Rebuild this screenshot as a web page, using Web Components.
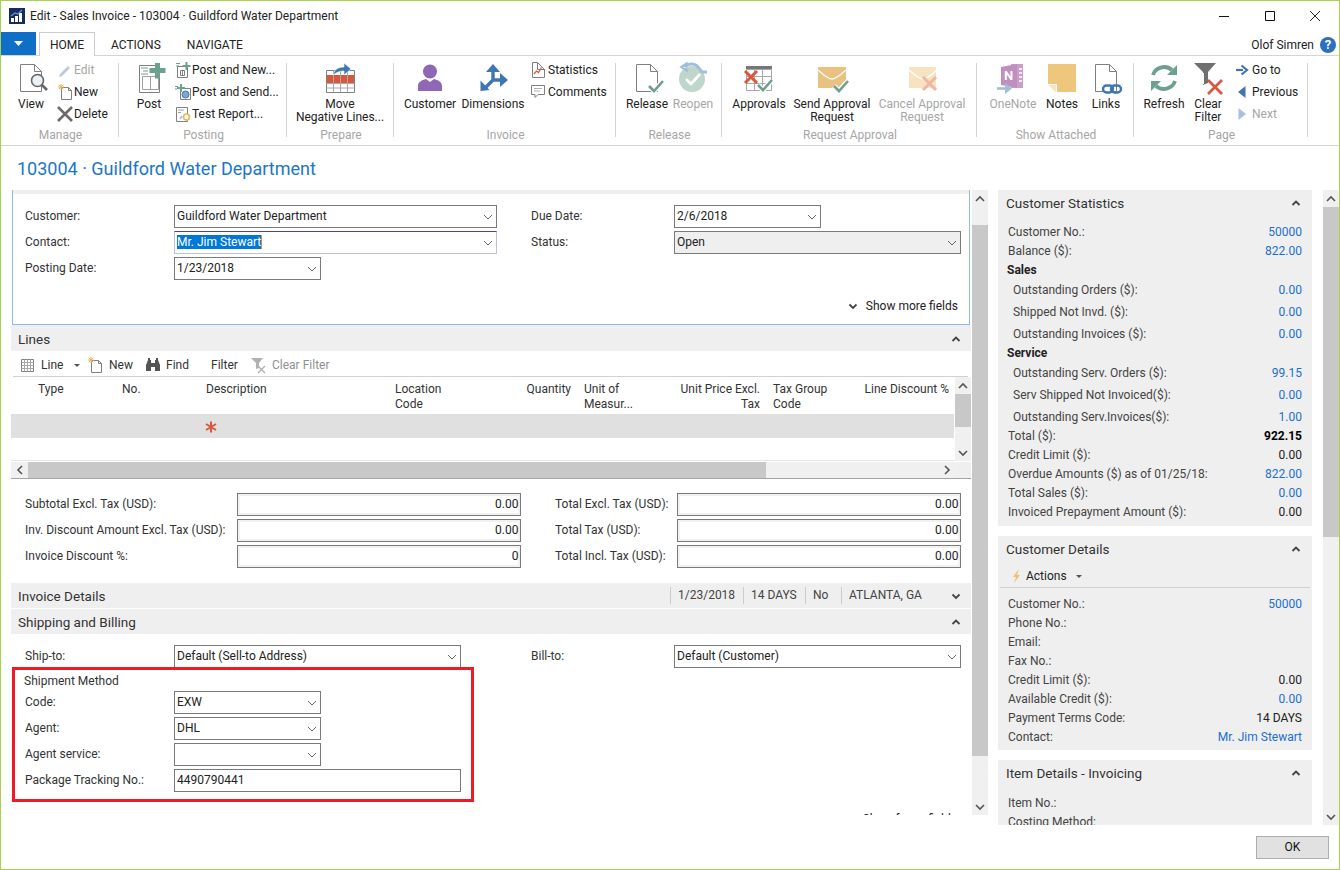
<!doctype html>
<html lang="en">
<head>
<meta charset="utf-8">
<title>Edit - Sales Invoice</title>
<style>
  html, body { margin: 0; padding: 0; background: #fff; }
  body { font: 12px/16px Roboto, "Liberation Sans", sans-serif; color: #222; }
</style>
</head>
<body>
<invoice-window>
  <title-bar>Edit - Sales Invoice - 103004 · Guildford Water Department</title-bar>
  <ribbon-tabs>Olof Simren</ribbon-tabs>
  <ribbon-bar>
    <ribbon-group style="width:118px" label="Manage">
      <ribbon-big icon="view" style="margin-left:5px;width:50px">View</ribbon-big>
      <ribbon-stack style="margin-left:2px">
        <ribbon-small icon="edit" disabled>Edit</ribbon-small>
        <ribbon-small icon="new">New</ribbon-small>
        <ribbon-small icon="delete">Delete</ribbon-small>
      </ribbon-stack>
    </ribbon-group>
    <ribbon-group style="width:168px" label="Posting">
      <ribbon-big icon="post" style="margin-left:4px;width:52px">Post</ribbon-big>
      <ribbon-stack style="margin-left:1px">
        <ribbon-small icon="postnew">Post and New...</ribbon-small>
        <ribbon-small icon="postsend">Post and Send...</ribbon-small>
        <ribbon-small icon="testreport">Test Report...</ribbon-small>
      </ribbon-stack>
    </ribbon-group>
    <ribbon-group style="width:107px" label="Prepare">
      <ribbon-big icon="move" style="width:106px">Move<br>Negative Lines...</ribbon-big>
    </ribbon-group>
    <ribbon-group style="width:222px" label="Invoice">
      <ribbon-big icon="customer" style="margin-left:6px;width:60px">Customer</ribbon-big>
      <ribbon-big icon="dimensions" style="margin-left:2px;width:62px">Dimensions</ribbon-big>
      <ribbon-stack style="margin-left:8px">
        <ribbon-small icon="statistics">Statistics</ribbon-small>
        <ribbon-small icon="comments">Comments</ribbon-small>
      </ribbon-stack>
    </ribbon-group>
    <ribbon-group style="width:106px" label="Release">
      <ribbon-big icon="release" style="margin-left:11px;width:40px">Release</ribbon-big>
      <ribbon-big icon="reopen" disabled style="margin-left:6px;width:40px">Reopen</ribbon-big>
    </ribbon-group>
    <ribbon-group style="width:255px" label="Request Approval">
      <ribbon-big icon="approvals" style="margin-left:7px;width:60px">Approvals</ribbon-big>
      <ribbon-big icon="sendapproval" style="margin-left:1px;width:84px">Send Approval<br>Request</ribbon-big>
      <ribbon-big icon="cancelapproval" disabled style="margin-left:2px;width:92px">Cancel Approval<br>Request</ribbon-big>
    </ribbon-group>
    <ribbon-group style="width:157px" label="Show Attached">
      <ribbon-big icon="onenote" disabled style="margin-left:6px;width:60px">OneNote</ribbon-big>
      <ribbon-big icon="notes" style="width:38px">Notes</ribbon-big>
      <ribbon-big icon="links" style="width:50px">Links</ribbon-big>
    </ribbon-group>
    <ribbon-group style="width:174px" label="Page">
      <ribbon-big icon="refresh" style="margin-left:4px;width:52px">Refresh</ribbon-big>
      <ribbon-big icon="clearfilter" style="width:36px">Clear<br>Filter</ribbon-big>
      <ribbon-stack style="margin-left:10px">
        <ribbon-small icon="goto">Go to</ribbon-small>
        <ribbon-small icon="previous">Previous</ribbon-small>
        <ribbon-small icon="next" disabled>Next</ribbon-small>
      </ribbon-stack>
    </ribbon-group>
  </ribbon-bar>
  <page-title>103004 · Guildford Water Department</page-title>
  <work-space>
    <main-pane slot="main">
      <focus-panel>
        <field-column>
          <form-field label="Customer:"><value-box drop style="width:323px">Guildford Water Department</value-box></form-field>
          <form-field label="Contact:"><value-box drop focused style="width:323px"><mark>Mr. Jim Stewart</mark></value-box></form-field>
          <form-field label="Posting Date:"><value-box drop style="width:147px">1/23/2018</value-box></form-field>
        </field-column>
        <field-column slot="right" style="--label:143px">
          <form-field label="Due Date:"><value-box drop style="width:147px">2/6/2018</value-box></form-field>
          <form-field label="Status:"><value-box drop readonly style="width:287px">Open</value-box></form-field>
        </field-column>
        <show-fields slot="more">Show more fields</show-fields>
      </focus-panel>

      <fast-tab style="height:26px;padding-top:1px;box-sizing:border-box" fold="fold-up">Lines</fast-tab>
      <tool-bar style="padding-left:10px">
        <tool-item icon="grid" caret style="width:67px;--gap:4px">Line</tool-item>
        <tool-item icon="new" style="width:57px">New</tool-item>
        <tool-item icon="find" style="width:66px">Find</tool-item>
        <tool-item style="width:40px">Filter</tool-item>
        <tool-item icon="clearsmall" disabled>Clear Filter</tool-item>
      </tool-bar>
      <lines-grid></lines-grid>

      <total-fields>
        <field-column style="--label:212px">
          <form-field label="Subtotal Excl. Tax (USD):"><value-box total style="width:284px">0.00</value-box></form-field>
          <form-field label="Inv. Discount Amount Excl. Tax (USD):"><value-box total style="width:284px">0.00</value-box></form-field>
          <form-field label="Invoice Discount %:"><value-box total style="width:284px">0</value-box></form-field>
        </field-column>
        <field-column slot="right" style="--label:122px">
          <form-field label="Total Excl. Tax (USD):"><value-box total style="width:284px">0.00</value-box></form-field>
          <form-field label="Total Tax (USD):"><value-box total style="width:284px">0.00</value-box></form-field>
          <form-field label="Total Incl. Tax (USD):"><value-box total style="width:284px">0.00</value-box></form-field>
        </field-column>
      </total-fields>

      <fast-tab style="height:25px;margin-bottom:1px" fold="fold-down">Invoice Details
        <fact-cell slot="facts" style="width:73px">1/23/2018</fact-cell>
        <fact-cell slot="facts" style="width:62px">14 DAYS</fact-cell>
        <fact-cell slot="facts" style="width:36px">No</fact-cell>
        <fact-cell slot="facts" style="width:100px">ATLANTA, GA</fact-cell>
      </fast-tab>
      <fast-tab style="height:25px" fold="fold-up">Shipping and Billing</fast-tab>

      <shipping-fields>
        <field-column>
          <form-field label="Ship-to:"><value-box drop style="width:287px">Default (Sell-to Address)</value-box></form-field>
          <group-caption>Shipment Method</group-caption>
          <form-field label="Code:"><value-box drop style="width:147px">EXW</value-box></form-field>
          <form-field label="Agent:"><value-box drop style="width:147px">DHL</value-box></form-field>
          <form-field label="Agent service:"><value-box drop style="width:147px"></value-box></form-field>
          <form-field label="Package Tracking No.:"><value-box style="width:287px">4490790441</value-box></form-field>
        </field-column>
        <field-column slot="right" style="--label:143px">
          <form-field label="Bill-to:"><value-box drop style="width:287px">Default (Customer)</value-box></form-field>
        </field-column>
        <show-fields slot="more" fewer>Show fewer fields</show-fields>
      </shipping-fields>
      <mark-box></mark-box>
    </main-pane>
    <nav-scrollbar slot="main-bar" style="--offset:18px;--thumb:531px"></nav-scrollbar>

    <fact-box slot="side" heading="Customer Statistics" style="padding-bottom:5px">
      <cue-row label="Customer No.:" link>50000</cue-row>
      <cue-row label="Balance ($):" link>822.00</cue-row>
      <cue-row label="Sales" head></cue-row>
      <cue-row label="Outstanding Orders ($):" link indent pull>0.00</cue-row>
      <cue-row label="Shipped Not Invd. ($):" link indent>0.00</cue-row>
      <cue-row label="Outstanding Invoices ($):" link indent>0.00</cue-row>
      <cue-row label="Service" head pull></cue-row>
      <cue-row label="Outstanding Serv. Orders ($):" link indent pull>99.15</cue-row>
      <cue-row label="Serv Shipped Not Invoiced($):" link indent>0.00</cue-row>
      <cue-row label="Outstanding Serv.Invoices($):" link indent>1.00</cue-row>
      <cue-row label="Total ($):" strong pull>922.15</cue-row>
      <cue-row label="Credit Limit ($):">0.00</cue-row>
      <cue-row label="Overdue Amounts ($) as of 01/25/18:" link>822.00</cue-row>
      <cue-row label="Total Sales ($):" link>0.00</cue-row>
      <cue-row label="Invoiced Prepayment Amount ($):">0.00</cue-row>
    </fact-box>
    <fact-box slot="side" heading="Customer Details" actions>
      <cue-row label="Customer No.:" link>50000</cue-row>
      <cue-row label="Phone No.:"></cue-row>
      <cue-row label="Email:"></cue-row>
      <cue-row label="Fax No.:"></cue-row>
      <cue-row label="Credit Limit ($):">0.00</cue-row>
      <cue-row label="Available Credit ($):" link>0.00</cue-row>
      <cue-row label="Payment Terms Code:">14 DAYS</cue-row>
      <cue-row label="Contact:" link>Mr. Jim Stewart</cue-row>
    </fact-box>
    <fact-box slot="side" heading="Item Details - Invoicing">
      <cue-row label="Item No.:" style="margin-top:1px"></cue-row>
      <cue-row label="Costing Method:"></cue-row>
    </fact-box>
    <nav-scrollbar slot="side-bar" style="--offset:0px;--thumb:330px"></nav-scrollbar>
  </work-space>
  <dialog-footer>OK</dialog-footer>
</invoice-window>

<script>
const GREY = "#808080";
const GREEN = "#6da08e";
const RED = "#d9583c";
const BLUE = "#3f76b2";

// page outline with a folded corner
const page = (x, y, w, h, color = GREY) =>
  `<path d="M${x} ${y}h${w - 7}l7 7v${h - 7}h-${w}zM${x + w - 7} ${y}v7h7" fill="#fff" stroke="${color}"/>`;
const tick = (x, y) =>
  `<path d="M${x} ${y}l5 5 9-10" fill="none" stroke="#fff" stroke-width="5"/><path d="M${x} ${y}l5 5 9-10" fill="none" stroke="${GREEN}" stroke-width="2.6"/>`;
const cross = (x, y, s, color = RED, width = 2.6) =>
  `<path d="M${x} ${y}l${s} ${s}M${x + s} ${y}l-${s} ${s}" stroke="${color}" stroke-width="${width}" fill="none"/>`;
const chevron = (points, color, width) =>
  `<polyline points="${points}" fill="none" stroke="${color}" stroke-width="${width}"/>`;

const icons = {
  // ribbon, 32px
  view: [32, `${page(5.5, 2.5, 21, 27)}<circle cx="22.5" cy="18.5" r="6" fill="#eaf1f7" stroke="#666" stroke-width="1.6"/><path d="M27 23l5 5" stroke="#666" stroke-width="2.6"/>`],
  post: [32, `<path d="M6.5 3.5h20v27h-20z" fill="#fff" stroke="${GREY}"/><path d="M9.5 14.5h16v13h-16zM17.5 14.5v13" fill="none" stroke="#a0a0a0"/><path d="M8 6h7M10 9h5M8 12h7" stroke="${GREEN}"/><path d="M22 1h5v5h5.500v5H27v5.500h-5V11h-5.500V6H22z" fill="${GREEN}"/>`],
  move: [32, `<path d="M2.5 8.5h28v22h-28z" fill="#fff" stroke="${GREY}"/><path d="M3 13h27v8H3z" fill="${RED}"/><path d="M2.5 21.5h28M2.5 26h28M9.5 8.5v22M16.5 8.5v22M23.5 8.5v22" stroke="#a8a8a8"/><path d="M9.500 13C10 7 15 5 20 5V1l7 6-7 6V9c-4 0-7 1-10.500 4z" fill="${BLUE}" stroke="#fff" stroke-width=".6"/>`],
  customer: [32, `<circle cx="16" cy="9.500" r="7" fill="#8e68b6"/><path d="M4 29v-5c0-4 4-6 8-7l4 3 4-3c4 1 8 3 8 7v5z" fill="#8e68b6"/>`],
  dimensions: [32, `<path d="M16 9v9L8 26M16 18l9 0" fill="none" stroke="${BLUE}" stroke-width="3.400"/><path d="M16 2l7 8H9zM3.500 29V18.500l9 9.500zM31 18l-8 7V11z" fill="${BLUE}"/>`],
  release: [32, `${page(5.5, 2.5, 21, 27)}${tick(18, 24)}`],
  reopen: [32, `<circle cx="15" cy="17" r="13" fill="#bfd6cc"/><path d="M9 17l5 5 9-10" fill="none" stroke="#fff" stroke-width="2.800"/><path d="M8 5c3-4 10-4 13 0l4 5h5-1M11 1L5 5l6 4" fill="none" stroke="#a3bedb" stroke-width="3"/>`],
  approvals: [32, `<path d="M3 4h26v3H3z" fill="#777"/><path d="M3.500 7.500h25v21h-25zM3.500 14.500h25M3.500 21.500h25M11.500 7.500v21M19.500 7.500v21" fill="#fff" stroke="#a8a8a8"/>${cross(2, 9, 12, RED, 3)}${tick(15, 23)}`],
  sendapproval: [32, `<path d="M2 5h28v21H2z" fill="#e9c282"/><path d="M2 8c5 4 9 9 14 9s9-5 14-9" fill="none" stroke="#fff" stroke-width="1.300"/>${tick(18, 24)}`],
  cancelapproval: [32, `<path d="M3 5h27v21H3z" fill="#f7e3bf"/><path d="M3 8c5 4 9 9 14 9s9-5 14-9" fill="none" stroke="#fff" stroke-width="1.300"/>${cross(17, 15, 13, "#eeb6a6", 3)}`],
  onenote: [32, `<path d="M14 2l12 0 0 24-12 0z" fill="#c79fc9"/><path d="M4 5l16-3v24L4 23z" fill="#c08fc0"/><text x="7" y="18" font-family="Roboto,sans-serif" font-size="13" font-weight="700" fill="#fff">N</text><path d="M22 7h3M22 11h3M22 15h3M22 19h3" stroke="#fff" stroke-width="1.600"/><path d="M0 26.500h9" stroke="#a3bedb" stroke-width="2.600"/><path d="M8 21l7 5.500-7 5.500z" fill="#a3bedb"/>`],
  notes: [32, `<path d="M2 2h28v28H10L2 22z" fill="#eec77d"/><path d="M2 22h8v8z" fill="#f8e5c0"/><path d="M2 22.500h8.500V30" fill="none" stroke="#fff"/>`],
  links: [32, `${page(5.5, 2.5, 21, 27)}<rect x="13" y="23.500" width="10" height="7" rx="3.500" fill="#fff" stroke="${BLUE}" stroke-width="2.400"/><rect x="21" y="23.500" width="10" height="7" rx="3.500" fill="none" stroke="${BLUE}" stroke-width="2.400"/>`],
  refresh: [32, `<path d="M5 13C7 6 17 2 24 8" fill="none" stroke="${GREEN}" stroke-width="3.800"/><path d="M29 3v10H19z" fill="${GREEN}"/><path d="M27 19c-2 7-12 11-19 5" fill="none" stroke="${GREEN}" stroke-width="3.800"/><path d="M3 29V19h10z" fill="${GREEN}"/>`],
  clearfilter: [32, `<path d="M2 1h22l-8 9v11l-5 2V10z" fill="#707070"/><path d="M11.500 11v11" stroke="#fff"/>${cross(16, 18, 14, RED, 2.800)}`],
  // small commands, 16px
  edit: [16, `<path d="M2 12l8-8 2 2-8 8-3 1z" fill="#b9c9d9"/>`],
  new: [16, `<path d="M3.500 3.500h7l3 3v9h-10zM10.500 3.500v3h3" fill="#fff" stroke="${GREY}"/><path d="M3 0v6M0 3h6M.8 .8l4.400 4.400M5.200 .8L.8 5.200" stroke="#e8b45c"/>`],
  delete: [16, cross(0, 1, 14, "#6a6a6a", 2.600)],
  postnew: [16, `<path d="M1.500 4.500h10v11h-10zM4.500 8.500h4v5h-4zM6.500 8.500v5" fill="#fff" stroke="${GREY}"/><path d="M0 1.500h4M0 4h3" stroke="${GREEN}"/><path d="M9.500 0h2v3h3v2h-3v3h-2V5h-3V3h3z" fill="${GREEN}"/>`],
  postsend: [16, `<path d="M4.500 4.500h10v11h-10z" fill="#fff" stroke="${GREY}"/><circle cx="9.500" cy="10.500" r="3.500" fill="#7da7cf" stroke="${BLUE}"/><path d="M-1 2.500h3M-1 5h2" stroke="${GREEN}"/><path d="M4 0h2v3h3v2H6v3H4V5H1V3h3z" fill="${GREEN}"/>`],
  testreport: [16, `<path d="M.5 1.500h11v14H.5z" fill="#fff" stroke="${GREY}"/><path d="M2 4h6M2 6.500h3" stroke="#8fa6c0"/><circle cx="10.500" cy="11" r="3" fill="#fff" stroke="#e8b45c" stroke-width="1.600"/><path d="M4 13l2-3" stroke="#a3bedb" stroke-width="1.500"/>`],
  statistics: [16, `${page(.5, .5, 12, 15)}<path d="M2 12l2.500-3 2 1.500 3-5" fill="none" stroke="${RED}" stroke-width="1.200"/>`],
  comments: [16, `<path d="M-.5 1.500h13v9H6l-3 3v-3H-.5z" fill="#fff" stroke="${GREY}"/><path d="M2 4.500h8M2 7h6" stroke="#b0b0b0"/>`],
  goto: [16, `<path d="M0 8h7" stroke="${BLUE}" stroke-width="2.200"/><path d="M5.500 3.500l5.500 4.500-5.500 4.500" fill="none" stroke="${BLUE}" stroke-width="2.200"/>`],
  previous: [16, `<path d="M9.500 2v12L2 8z" fill="${BLUE}"/>`],
  next: [16, `<path d="M2.500 2v12L10 8z" fill="#a8c0dd"/>`],
  grid: [16, `<path d="M.5 2.500h12v12H.5z" fill="#fff" stroke="${GREY}"/><path d="M.5 5.500h12M.5 8.500h12M.5 11.500h12M3.500 2.500v12M6.500 2.500v12M9.500 2.500v12" stroke="#a8a8a8"/>`],
  find: [16, `<path d="M1 14V8l2-5h3v11zM15 14V8l-2-5h-3v11zM6 6h4v4H6z" fill="#555"/><path d="M3 1h2v2H3zM11 1h2v2h-2z" fill="#555"/>`],
  clearsmall: [16, `<path d="M0 1h12L8 6v5l-3 1V6z" fill="#b0b0b0"/>${cross(7, 9, 7, "#b0b0b0", 1.400)}`],
  bolt: [16, `<path d="M11 1L5 9h3l-2 6 6-8H9z" fill="#f0c070"/>`],
  // chevrons, 10px
  drop: [10, chevron("1,3 5,7 9,3", "#666", 1)],
  "fold-up": [10, chevron("1.500,7 5,3.500 8.500,7", "#444", 1.800)],
  "fold-down": [10, chevron("1.500,3.500 5,7 8.500,3.500", "#444", 1.800)],
  "bar-up": [10, chevron("1,7 5,3 9,7", "#555", 1.600)],
  "bar-down": [10, chevron("1,3 5,7 9,3", "#555", 1.600)],
  "bar-left": [10, chevron("7,1 3,5 7,9", "#555", 1.600)],
  "bar-right": [10, chevron("3,1 7,5 3,9", "#555", 1.600)],
  caret: [10, `<path d="M2 4h6L5 7z" fill="#555"/>`],
};

// the name may arrive after connecting, when a parent sets it from its own attribute
class NavIcon extends HTMLElement {
  static observedAttributes = ["name"];

  constructor() {
    super();
    this.attachShadow({ mode: "open" }).innerHTML = `
      <style>:host { display: inline-flex; flex: none; } :host([hidden]) { display: none; } svg { display: block; overflow: visible; }</style>
      <span id="glyph"></span>
    `;
  }

  attributeChangedCallback() {
    const [size, body] = icons[this.getAttribute("name")] ?? [16, ""];
    this.shadowRoot.getElementById("glyph").innerHTML =
      `<svg width="${size}" height="${size}" viewBox="0 0 ${size} ${size}">${body}</svg>`;
  }
}

customElements.define("nav-icon", NavIcon);

const defineElement = (tag, markup, init) => {
  const template = document.createElement("template");
  template.innerHTML = markup;
  customElements.define(tag, class extends HTMLElement {
    constructor() {
      super();
      this.attachShadow({ mode: "open" }).append(template.content.cloneNode(true));
    }
    connectedCallback() {
      if (init) init(this, this.shadowRoot);
    }
  });
};

defineElement("invoice-window", `
  <style>
    :host {
      box-sizing: border-box;
      display: grid;
      grid-template-rows: 31px 23px 91px 44px 635px 44px;
      width: 1340px;
      height: 870px;
      overflow: hidden;
      border: 1px solid #a9d04e;
      background: #fff;
    }
  </style>
  <slot></slot>
`);

defineElement("title-bar", `
  <style>
    :host { display: flex; align-items: center; height: 31px; padding: 0 1px 2px 8px; box-sizing: border-box; color: #222; }
    svg { display: block; }
    .logo { margin-right: 5px; }
    .text { flex: 1; }
    .control { display: flex; justify-content: center; width: 45.5px; }
  </style>
  <svg class="logo" width="16" height="16" viewBox="0 0 16 16">
    <path d="M0 0h16v16H0z" fill="#1b2a5c"/>
    <path d="M2 10h3v4H2zM6 8h3v6H6zM10 5h3v9h-3z" fill="#fff"/>
    <path d="M2 8l4-3 3 1 4-4" fill="none" stroke="#5b9bd5" stroke-width="1.200"/>
  </svg>
  <span class="text"><slot></slot></span>
  <span class="control"><svg width="10" height="10"><path d="M0 5.500h10" stroke="#111"/></svg></span>
  <span class="control"><svg width="10" height="10"><path d="M.5 .5h9v9h-9z" fill="none" stroke="#111"/></svg></span>
  <span class="control"><svg width="10" height="10"><path d="M0 0l10 10M10 0L0 10" stroke="#111" stroke-width=".9"/></svg></span>
`);

defineElement("ribbon-tabs", `
  <style>
    :host { position: relative; z-index: 1; display: flex; align-items: flex-start; height: 23px; color: #222; }
    .file { width: 35px; height: 23px; display: flex; align-items: center; justify-content: center; background: #0f6fc6; }
    .home {
      box-sizing: border-box; width: 56px; height: 24px; margin-left: 3px;
      border: 1px solid #ccc; border-bottom: 0; background: #fff;
      text-align: center; line-height: 25px;
    }
    .tab { line-height: 26px; margin-left: 16px; }
    .tab + .tab { margin-left: 26px; }
    .user { margin-left: auto; display: flex; align-items: center; gap: 6px; height: 26px; padding-right: 3px; }
    .help {
      width: 16px; height: 16px; border-radius: 50%; background: #2b70c2; color: #fff;
      font-weight: 700; font-size: 13px; line-height: 16px; text-align: center;
    }
  </style>
  <span class="file"><svg width="9" height="5"><path d="M0 0h9L4.500 5z" fill="#fff"/></svg></span>
  <span class="home">HOME</span>
  <span class="tab">ACTIONS</span>
  <span class="tab">NAVIGATE</span>
  <span class="user"><slot></slot><span class="help">?</span></span>
`);

defineElement("ribbon-bar", `
  <style>
    :host {
      box-sizing: border-box; display: flex; height: 91px;
      border-top: 1px solid #d4d4d4; border-bottom: 1px solid #d4d4d4;
    }
  </style>
  <slot></slot>
`);

defineElement("ribbon-group", `
  <style>
    :host { display: flex; flex: none; height: 89px; }
    .body { flex: 1; min-width: 0; display: grid; grid-template-rows: 65px 16px; padding-top: 6px; }
    .items { display: flex; align-items: flex-start; }
    .label { color: #a6a6a6; text-align: center; padding-left: 2px; }
    .divider { width: 1px; margin: 7px 0 8px; background: #d4d4d4; }
  </style>
  <div class="body">
    <div class="items"><slot></slot></div>
    <div class="label" id="label"></div>
  </div>
  <div class="divider"></div>
`, (host, root) => {
  root.getElementById("label").textContent = host.getAttribute("label");
});

defineElement("ribbon-big", `
  <style>
    :host { display: flex; flex: none; flex-direction: column; align-items: center; text-align: center; line-height: 13px; white-space: nowrap; color: #222; }
    :host([disabled]) { color: #a6a6a6; }
    .icon { height: 32px; margin-bottom: 4px; }
  </style>
  <div class="icon"><nav-icon id="icon"></nav-icon></div>
  <div><slot></slot></div>
`, (host, root) => {
  root.getElementById("icon").setAttribute("name", host.getAttribute("icon"));
});

defineElement("ribbon-stack", `
  <style>:host { display: flex; flex: none; flex-direction: column; gap: 6px; }</style>
  <slot></slot>
`);

defineElement("ribbon-small", `
  <style>
    :host { display: flex; align-items: center; height: 16px; white-space: nowrap; color: #222; }
    :host([disabled]) { color: #a6a6a6; }
  </style>
  <nav-icon id="icon"></nav-icon>
  <slot></slot>
`, (host, root) => {
  root.getElementById("icon").setAttribute("name", host.getAttribute("icon"));
});

defineElement("page-title", `
  <style>
    :host { display: block; padding: 11px 0 0 16px; font-size: 18px; line-height: 24px; color: #1b76c8; }
  </style>
  <slot></slot>
`);

defineElement("work-space", `
  <style>
    :host { display: flex; align-items: flex-start; height: 635px; padding-left: 10px; }
    .main { flex: none; width: 960px; height: 625px; overflow: hidden; }
    .main-bar { flex: none; display: flex; width: 16px; height: 625px; margin-left: 1px; }
    .side {
      flex: none; display: flex; flex-direction: column; gap: 10px;
      width: 314px; height: 635px; overflow: hidden; margin-left: 10px;
    }
    .side-bar { flex: none; display: flex; width: 16px; height: 635px; margin-left: 11px; }
  </style>
  <div class="main"><slot name="main"></slot></div>
  <div class="main-bar"><slot name="main-bar"></slot></div>
  <div class="side"><slot name="side"></slot></div>
  <div class="side-bar"><slot name="side-bar"></slot></div>
`);

defineElement("main-pane", `
  <style>:host { position: relative; display: flex; flex-direction: column; width: 960px; }</style>
  <slot></slot>
`);

defineElement("nav-scrollbar", `
  <style>
    :host { display: flex; flex-direction: column; flex: 1; background: #f0f0f0; }
    :host([horizontal]) { flex-direction: row; }
    .end { flex: none; width: 16px; height: 17px; display: flex; align-items: center; justify-content: center; }
    :host([horizontal]) .end { width: 17px; height: 16px; }
    .track { flex: 1; padding-top: var(--offset, 0); }
    :host([horizontal]) .track { padding-top: 0; }
    .thumb { height: var(--thumb, 40px); background: #c8c8c8; }
    :host([horizontal]) .thumb { height: 100%; width: var(--thumb, 40px); }
  </style>
  <div class="end"><nav-icon id="start"></nav-icon></div>
  <div class="track"><div class="thumb"></div></div>
  <div class="end"><nav-icon id="stop"></nav-icon></div>
`, (host, root) => {
  const horizontal = host.hasAttribute("horizontal");
  root.getElementById("start").setAttribute("name", horizontal ? "bar-left" : "bar-up");
  root.getElementById("stop").setAttribute("name", horizontal ? "bar-right" : "bar-down");
});

const twoColumns = (extra) => `
  <style>
    :host { display: block; flex: none; color: #333; }
    .columns { display: flex; }
    .left { flex: none; }
    ${extra}
  </style>
`;

defineElement("focus-panel", `
  ${twoColumns(`
    :host {
      box-sizing: border-box; height: 135px; margin: 0 1px;
      border: 1px solid #8fb8ee; border-top: 0;
    }
    .strip { height: 4px; background: #efefef; }
    .columns { padding: 11px 0 0 12px; height: 75px; }
    .left { width: 506px; }
    .more { display: flex; justify-content: flex-end; padding: 17px 11px 0 0; }
  `)}
  <div class="strip"></div>
  <div class="columns">
    <div class="left"><slot></slot></div>
    <div><slot name="right"></slot></div>
  </div>
  <div class="more"><slot name="more"></slot></div>
`);

defineElement("total-fields", `
  ${twoColumns(`
    :host { padding: 14px 0 15px 14px; }
    .left { width: 530px; }
  `)}
  <div class="columns">
    <div class="left"><slot></slot></div>
    <div><slot name="right"></slot></div>
  </div>
`);

defineElement("shipping-fields", `
  ${twoColumns(`
    :host { padding: 11px 0 0 14px; }
    .left { width: 506px; }
    .more { display: flex; justify-content: flex-end; padding: 18px 14px 0 0; }
  `)}
  <div class="columns">
    <div class="left"><slot></slot></div>
    <div><slot name="right"></slot></div>
  </div>
  <div class="more"><slot name="more"></slot></div>
`);

defineElement("field-column", `
  <style>:host { display: flex; flex-direction: column; gap: 3px; }</style>
  <slot></slot>
`);

defineElement("form-field", `
  <style>
    :host { display: grid; grid-template-columns: var(--label, 149px) auto; justify-content: start; align-items: center; height: 23px; white-space: nowrap; }
    .text { margin-top: -2px; }
  </style>
  <span class="text" id="label"></span>
  <slot></slot>
`, (host, root) => {
  root.getElementById("label").textContent = host.getAttribute("label");
});

defineElement("group-caption", `
  <style>:host { display: block; height: 16px; margin: -3px 0 -1px -1px; padding-top: 5px; }</style>
  <slot></slot>
`);

defineElement("value-box", `
  <style>
    :host {
      box-sizing: border-box; display: flex; align-items: center; height: 23px;
      border: 1px solid #7a7a7a; background: #fff; color: #222; white-space: nowrap;
    }
    :host([readonly]) { background: #efefef; }
    :host([focused]) { border-color: #c4bde2; border-top-color: #4f4590; }
    :host([total]) { box-shadow: inset 0 0 0 2px #f1f1f1; }
    .text { flex: 1; min-width: 0; padding-left: 2px; margin-top: -2px; }
    :host([total]) .text { padding: 0 1.500px 0 0; text-align: right; }
    ::slotted(mark) { background: #0078d7; color: #fff; border-right: 1px solid #e08a20; }
    nav-icon { margin-right: 3px; display: none; }
    :host([drop]) nav-icon { display: inline-flex; }
  </style>
  <span class="text"><slot></slot></span>
  <nav-icon name="drop"></nav-icon>
`);

defineElement("show-fields", `
  <style>
    :host { display: flex; align-items: center; gap: 8px; height: 18px; color: #222; white-space: nowrap; }
  </style>
  <nav-icon name="fold-down" id="icon"></nav-icon>
  <slot></slot>
`, (host, root) => {
  if (host.hasAttribute("fewer")) root.getElementById("icon").setAttribute("name", "fold-up");
});

defineElement("fast-tab", `
  <style>
    :host {
      display: flex; flex: none; align-items: center; background: #efefef;
      padding-left: 7px; font-size: 13.5px; color: #333; white-space: nowrap;
    }
    .title { flex: 1; }
    .fold { flex: none; width: 30px; display: flex; justify-content: center; }
  </style>
  <span class="title"><slot></slot></span>
  <slot name="facts"></slot>
  <span class="fold"><nav-icon id="fold"></nav-icon></span>
`, (host, root) => {
  root.getElementById("fold").setAttribute("name", host.getAttribute("fold"));
});

defineElement("fact-cell", `
  <style>
    :host {
      box-sizing: border-box; display: block; flex: none; height: 17px; padding-left: 7px;
      border-left: 1px solid #ccc; font-size: 12px; line-height: 17px; color: #444;
    }
  </style>
  <slot></slot>
`);

defineElement("tool-bar", `
  <style>
    :host {
      display: flex; flex: none; align-items: center; box-sizing: border-box; height: 25px; color: #333;
      margin: 0 3px 0 0; padding-top: 2px; position: relative;
    }
    :host::after { content: ""; position: absolute; left: 2px; right: 0; bottom: -1px; height: 1px; background: #d0d0d0; }
  </style>
  <slot></slot>
`);

defineElement("tool-item", `
  <style>
    :host { display: flex; flex: none; align-items: center; gap: var(--gap, 5px); white-space: nowrap; box-sizing: border-box; }
    :host([disabled]) { color: #8f8f8f; }
    .caret { margin-left: 5px; }
  </style>
  <nav-icon id="icon"></nav-icon>
  <span><slot></slot></span>
  <nav-icon class="caret" id="caret" name="caret" hidden></nav-icon>
`, (host, root) => {
  const icon = root.getElementById("icon");
  if (host.hasAttribute("icon")) icon.setAttribute("name", host.getAttribute("icon"));
  else icon.hidden = true;
  root.getElementById("caret").hidden = !host.hasAttribute("caret");
});

defineElement("lines-grid", `
  <style>
    :host { display: block; flex: none; margin-top: 1px; color: #333; }
    .top { display: flex; height: 84px; }
    .table { flex: none; width: 944px; }
    .bar { flex: none; display: flex; width: 15px; height: 84px; }
    .head {
      box-sizing: border-box; height: 37px; display: grid; line-height: 15px; padding-top: 5px;
      grid-template-columns: 27px 84px 84px 189px 130px 46px 13px 96px 80px 13px 91px 85px;
      white-space: nowrap;
    }
    .right { text-align: right; }
    .row { height: 24px; background: #e0e0e0; display: flex; align-items: center; padding-left: 194px; margin-right: 1px; }
    .row svg { margin-top: 2px; }
    .rule { height: 1px; margin-top: 22px; background: #e6e6e6; }
    .hbar { display: flex; height: 16px; background: #efefef; padding-right: 16px; }
    .hbar nav-scrollbar { --thumb: 738px; }
    .base { height: 1px; background: #a6a6a6; }
    .spacer { height: 1px; }
  </style>
  <div class="top">
    <div class="table">
      <div class="head">
        <span></span><span>Type</span><span>No.</span><span>Description</span><span>Location<br>Code</span>
        <span class="right">Quantity</span><span></span><span>Unit of<br>Measur...</span>
        <span class="right">Unit Price Excl.<br>Tax</span><span></span><span>Tax Group<br>Code</span>
        <span class="right">Line Discount %</span>
      </div>
      <div class="row">
        <svg width="12" height="12" viewBox="0 0 12 12"><path d="M6 .500v11M1 3l10 6M11 3L1 9" stroke="#d9583c" stroke-width="2"/></svg>
      </div>
      <div class="rule"></div>
    </div>
    <div class="bar"><nav-scrollbar style="--offset:0px;--thumb:33px"></nav-scrollbar></div>
  </div>
  <div class="spacer"></div>
  <div class="hbar"><nav-scrollbar horizontal></nav-scrollbar></div>
  <div class="base"></div>
`);

defineElement("mark-box", `
  <style>
    :host {
      position: absolute; left: 1px; top: 477px; box-sizing: border-box;
      width: 462px; height: 135px; border: 3px solid #ed1c24;
    }
  </style>
`);

defineElement("fact-box", `
  <style>
    :host { display: block; flex: none; background: #efefef; padding-bottom: 4px; color: #444; }
    .head {
      display: flex; align-items: center; justify-content: space-between; height: 26px;
      padding: 0 11px 0 8px; font-size: 13.5px; color: #333;
    }
    .actions {
      display: none; align-items: center; gap: 2px; box-sizing: border-box; height: 26px; margin: 0 2px;
      padding: 3px 0 0 8px; border-bottom: 1px solid #d0d0d0; color: #222;
    }
    :host([actions]) .actions { display: flex; }
    .rows { padding-top: 6px; }
    .caret { margin-left: 5px; }
  </style>
  <div class="head"><span id="heading"></span><nav-icon name="fold-up"></nav-icon></div>
  <div class="actions"><nav-icon name="bolt"></nav-icon><span>Actions</span><nav-icon class="caret" name="caret"></nav-icon></div>
  <div class="rows"><slot></slot></div>
`, (host, root) => {
  root.getElementById("heading").textContent = host.getAttribute("heading");
});

defineElement("cue-row", `
  <style>
    :host {
      display: flex; justify-content: space-between; align-items: center; box-sizing: border-box;
      height: 19px; padding: 0 10px; color: #444; white-space: nowrap;
    }
    :host([indent]) { height: 22px; padding: 2px 10px 0 15px; }
    :host([head]) { padding-left: 9px; font-weight: 700; color: #222; }
    :host([pull]) { margin-top: -1px; }
    .value { color: #222; }
    :host([link]) .value { color: #1a6fd0; }
    :host([strong]) .value { font-weight: 700; color: #000; }
  </style>
  <span id="label"></span>
  <span class="value"><slot></slot></span>
`, (host, root) => {
  root.getElementById("label").textContent = host.getAttribute("label");
});

defineElement("dialog-footer", `
  <style>
    :host { display: flex; justify-content: flex-end; align-items: flex-start; padding: 11px 10px 0 0; }
    .ok {
      box-sizing: border-box; width: 73px; height: 23px; border: 1px solid #adadad;
      background: #e1e1e1; color: #111; text-align: center; line-height: 21px;
    }
  </style>
  <span class="ok"><slot></slot></span>
`);
</script>
</body>
</html>
